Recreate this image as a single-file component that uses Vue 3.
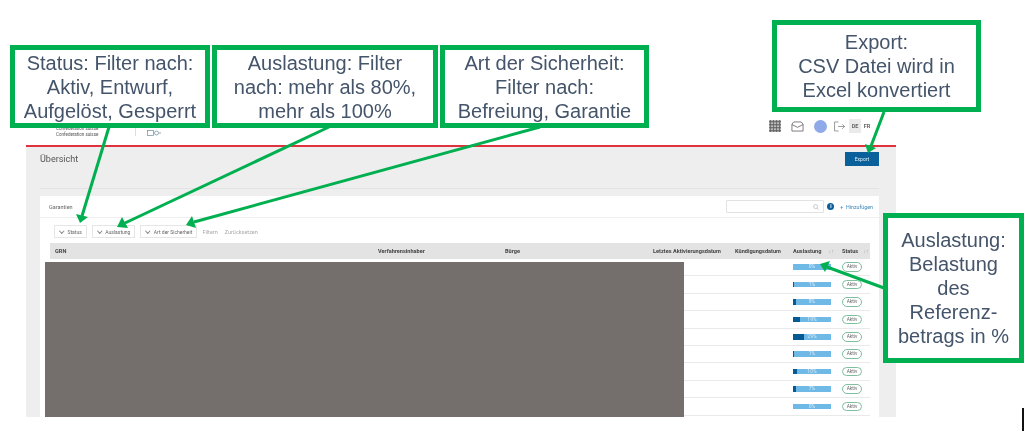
<script setup>
const rows = [0, 1, 8, 19, 29, 1, 10, 7, 0]
const arrows = [
  { x1: 109, y1: 127, x2: 82, y2: 216, tip: '80,223 76,214 88,217' },
  { x1: 329, y1: 127, x2: 125, y2: 223, tip: '117,227 122,217 128,228' },
  { x1: 540, y1: 127, x2: 194, y2: 222, tip: '186,225 192,216 196,228' },
  { x1: 884, y1: 112, x2: 871, y2: 146, tip: '868,153 865,144 876,148' },
  { x1: 884, y1: 288, x2: 827, y2: 267, tip: '820,264 830,261 825,272' }
]
</script>

<template>
  <div class="page">
    <div class="app">
      <header class="top">
        <div class="brand">
          <span>Confédération suisse</span>
          <span>Confederation suisse</span>
        </div>
        <div class="tag">
          <svg width="14" height="6" viewBox="0 0 14 6"><rect x="0.5" y="0.5" width="6" height="5" fill="none" stroke="#6a8a9a" stroke-width="0.7" /><circle cx="9.5" cy="3" r="2" fill="none" stroke="#6a8a9a" stroke-width="0.7" /><path d="M12 3h2" stroke="#6a8a9a" stroke-width="0.7" /></svg>
        </div>
        <span class="user">Benutzer</span>
        <div class="tools">
          <svg class="grid" width="12" height="12" viewBox="0 0 12 12" fill="#666">
            <template v-for="y in [1.5, 4.5, 7.5, 10.5]" :key="y">
              <circle v-for="x in [1.5, 4.5, 7.5, 10.5]" :key="x" :cx="x" :cy="y" r="1.5" />
            </template>
          </svg>
          <svg class="mail" width="13" height="11" viewBox="0 0 14 11" fill="none" stroke="#666" stroke-width="0.9"><path d="M1 3 3 .6h8L13 3v7.4H1zM1 3.4l6 3 6-3" /></svg>
          <span class="avatar"></span>
          <svg class="exit" width="11" height="11" viewBox="0 0 12 11" fill="none" stroke="#777" stroke-width="0.8"><path d="M5 .6H.6v9.8H5M4.500 5.500h7M9 3l2.500 2.500L9 8" /></svg>
          <span class="lang on">DE</span>
          <span class="lang">FR</span>
        </div>
      </header>
      <main class="content">
        <div class="title-row">
          <h1>Übersicht</h1>
          <button class="export">Export</button>
        </div>
        <section class="card">
          <div class="card-head">
            <h2>Garantien</h2>
            <div class="search">
              <svg width="6" height="6" viewBox="0 0 6 6" fill="none" stroke="#aaa" stroke-width="0.6"><circle cx="2.600" cy="2.600" r="2" /><path d="m4 4 1.600 1.600" /></svg>
            </div>
            <span class="info">i</span>
            <span class="add">+ &nbsp;Hinzufügen</span>
          </div>
          <div class="filters">
            <span class="filter"><i class="chev"></i>Status</span>
            <span class="filter"><i class="chev"></i>Auslastung</span>
            <span class="filter"><i class="chev"></i>Art der Sicherheit</span>
            <span class="link">Filtern</span>
            <span class="link last">Zurücksetzen</span>
          </div>
          <div class="table">
            <div class="row head">
              <span>GRN</span>
              <span>Verfahrensinhaber</span>
              <span>Bürge</span>
              <span>Letztes Aktivierungsdatum</span>
              <span>Kündigungsdatum</span>
              <span>Auslastung<em class="wide">↓↑</em></span>
              <span>Status<em>↓↑</em></span>
            </div>
            <div v-for="(p, i) in rows" :key="i" class="row">
              <span></span><span></span><span></span><span></span><span></span>
              <span class="bar">
                <i :style="{ width: p + '%' }"></i>
                <b>{{ p }}%</b>
              </span>
              <span class="badge">Aktiv</span>
            </div>
          </div>
          <div class="redact"></div>
        </section>
      </main>
    </div>

    <svg class="arrows" width="1024" height="431" viewBox="0 0 1024 431">
      <g v-for="(a, i) in arrows" :key="i">
        <line :x1="a.x1" :y1="a.y1" :x2="a.x2" :y2="a.y2" stroke="#00b050" stroke-width="3" />
        <polygon :points="a.tip" fill="#00b050" />
      </g>
    </svg>

    <div class="note n1">Status: Filter nach:<br />Aktiv, Entwurf,<br />Aufgelöst, Gesperrt</div>
    <div class="note n2">Auslastung: Filter<br />nach: mehr als 80%,<br />mehr als 100%</div>
    <div class="note n3">Art der Sicherheit:<br />Filter nach:<br />Befreiung, Garantie</div>
    <div class="note n4">Export:<br />CSV Datei wird in<br />Excel konvertiert</div>
    <div class="note n5">Auslastung:<br />Belastung<br />des<br />Referenz-<br />betrags in %</div>
    <div class="tick"></div>
  </div>
</template>

<style>
html, body { margin: 0; background: #fff; }
</style>

<style scoped>
.page {
  position: relative;
  width: 1024px;
  height: 431px;
  overflow: hidden;
  background: #fff;
  font-family: "Liberation Sans", Arial, sans-serif;
}
.app {
  width: 870px;
  margin-left: 26px;
  padding-top: 119px;
  font-family: Roboto, "Liberation Sans", sans-serif;
  filter: blur(0.45px);
}
.top {
  display: flex;
  align-items: flex-start;
  height: 26px;
  border-bottom: 2px solid #e0313f;
  box-sizing: content-box;
}
.brand {
  display: flex;
  flex-direction: column;
  justify-content: flex-end;
  width: 79px;
  height: 18px;
  margin-left: 30px;
  font-size: 4.500px;
  line-height: 5.500px;
  color: #555;
}
.tag {
  padding-left: 11px;
  height: 17px;
  display: flex;
  align-items: flex-end;
  border-left: 1px solid #ddd;
}
.user {
  margin: 3px 0 0 16px;
  font-size: 7px;
  color: #666;
}
.tools {
  margin-left: auto;
  display: flex;
  align-items: center;
  height: 14px;
  padding-right: 23px;
}
.mail { margin-left: 10px; }
.avatar {
  width: 13px;
  height: 13px;
  margin-left: 10px;
  border-radius: 50%;
  background: #8fa9e9;
}
.exit { margin-left: 7px; }
.lang {
  width: 12px;
  height: 14px;
  text-align: center;
  font-size: 5.500px;
  font-weight: 700;
  line-height: 14px;
  color: #666;
}
.lang.on { margin-left: 4px; background: #eaeaea; }
.content {
  height: 270px;
  padding: 0 17px 0 14px;
  background: #eee;
  box-sizing: border-box;
}
.title-row {
  display: flex;
  justify-content: space-between;
  height: 42px;
  padding-top: 5px;
  box-sizing: border-box;
  border-bottom: 1px solid #e3e3e3;
}
h1 {
  margin: 1px 0 0;
  font-size: 9px;
  line-height: 12px;
  font-weight: 400;
  color: #555;
}
.export {
  width: 34px;
  height: 14px;
  padding: 0;
  border: 0;
  background: #09609a;
  color: #e8f1f7;
  font: 5px Roboto, sans-serif;
}
.card {
  position: relative;
  height: 221px;
  margin-top: 7px;
  padding-right: 9px;
  background: #fff;
  overflow: hidden;
}
.card-head {
  display: flex;
  align-items: center;
  height: 22px;
  margin-right: -9px;
  padding: 0 6px 0 9px;
  box-sizing: border-box;
  border-bottom: 1px solid #eee;
}
h2 {
  margin: 0 auto 0 0;
  font-size: 5.500px;
  font-weight: 400;
  color: #666;
}
.search {
  display: flex;
  align-items: center;
  justify-content: flex-end;
  width: 98px;
  height: 13px;
  padding-right: 4px;
  box-sizing: border-box;
  border: 1px solid #e2e2e2;
  border-radius: 1px;
}
.info {
  width: 7px;
  height: 7px;
  margin-left: 3.500px;
  border-radius: 50%;
  background: #0c5f9b;
  color: #fff;
  text-align: center;
  font-size: 5px;
  font-weight: 700;
  line-height: 7px;
}
.add {
  margin-left: 6px;
  font-size: 5.300px;
  color: #3b86b8;
}
.filters {
  display: flex;
  align-items: center;
  height: 13px;
  margin: 7px 0 5px 14px;
  gap: 5px;
}
.filter {
  display: flex;
  align-items: center;
  height: 13px;
  padding: 0 4px 0 5px;
  box-sizing: border-box;
  border: 1px solid #e6e6e6;
  font-size: 5px;
  color: #666;
}
.chev {
  width: 2.500px;
  height: 2.500px;
  margin: -1px 4px 0 0;
  border-right: 0.7px solid #888;
  border-bottom: 0.7px solid #888;
  transform: rotate(45deg);
}
.link { font-size: 5.500px; color: #aaa; }
.link.last { margin-left: 2px; }
.table { margin-left: 10px; }
.row {
  display: grid;
  grid-template-columns: 323px 127px 148px 82px 58px 49px 1fr;
  height: 17.400px;
  padding-left: 5px;
  align-items: center;
  box-sizing: border-box;
  border-bottom: 1px solid #e9e9e9;
}
.row.head {
  height: 16px;
  background: #e3e3e3;
  border: 0;
  font-size: 5.600px;
  font-weight: 700;
  color: #444;
  white-space: nowrap;
}
.row.head em {
  margin-left: 5px;
  font-style: normal;
  font-weight: 400;
  color: #aaa;
}
.row.head em.wide { margin-left: 7px; }
.bar {
  position: relative;
  display: block;
  width: 38px;
  height: 5.500px;
  background: #6fb9e6;
}
.bar i {
  position: absolute;
  inset: 0 auto 0 0;
  background: #045a94;
}
.bar b {
  position: absolute;
  inset: 0;
  text-align: center;
  font-size: 5px;
  font-weight: 400;
  line-height: 5.500px;
  color: #dcecf7;
}
.badge {
  width: 20px;
  height: 9.500px;
  box-sizing: border-box;
  border: 1px solid #7fbf9c;
  border-radius: 5px;
  text-align: center;
  font-size: 4.800px;
  line-height: 7.500px;
  color: #666;
}
.redact {
  position: absolute;
  left: 5px;
  top: 66px;
  width: 639px;
  height: 155px;
  background: #746f6d;
}
.arrows {
  position: absolute;
  left: 0;
  top: 0;
  filter: blur(0.3px);
}
.note {
  position: absolute;
  display: flex;
  align-items: center;
  justify-content: center;
  box-sizing: border-box;
  border: 5px solid #00b050;
  background: #fff;
  text-align: center;
  font-size: 20px;
  line-height: 24px;
  color: #44546a;
  filter: blur(0.35px);
}
.n1 { left: 10px; top: 45px; width: 200px; height: 83px; }
.n2 { left: 212px; top: 45px; width: 226px; height: 83px; }
.n3 { left: 440px; top: 45px; width: 209px; height: 83px; }
.n4 { left: 772px; top: 20px; width: 209px; height: 92px; }
.n5 { left: 883px; top: 213px; width: 141px; height: 150px; }
.tick {
  position: absolute;
  right: 0;
  top: 408px;
  width: 2px;
  height: 23px;
  background: #111;
}
</style>
